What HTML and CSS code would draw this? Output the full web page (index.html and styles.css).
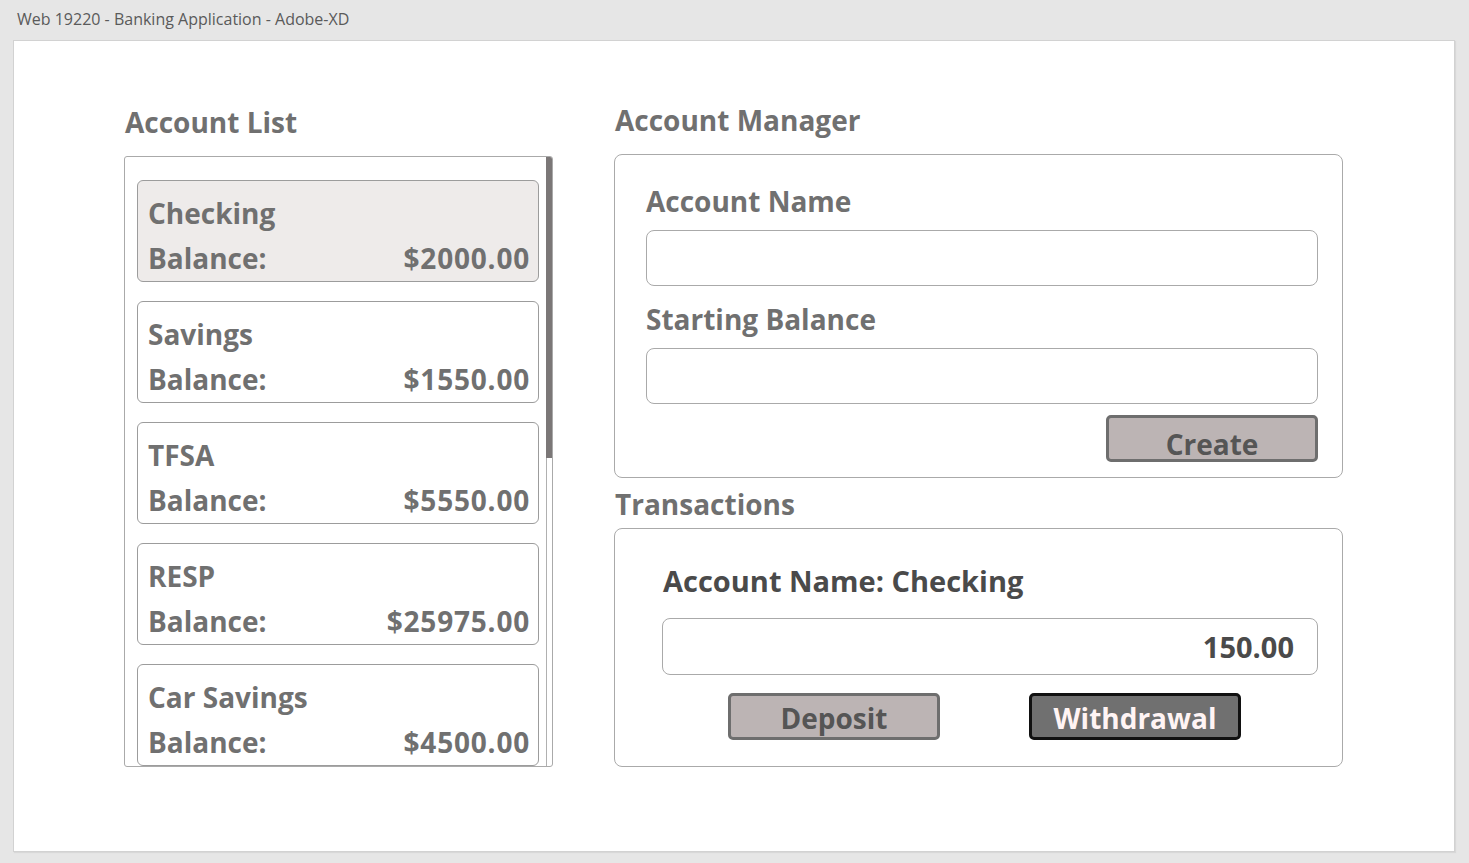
FILE: index.html
```html
<!DOCTYPE html>
<html lang="en">
<head>
<meta charset="utf-8">
<title>Web 19220 - Banking Application - Adobe-XD</title>
<link rel="stylesheet" href="styles.css">
</head>
<body>
<div class="titlebar">Web 19220 - Banking Application - Adobe-XD</div>
<div class="canvas">
  <section class="left">
    <h2 class="heading">Account List</h2>
    <div class="listbox">
      <div class="cards">
        <div class="card selected"><div class="name">Checking</div><div class="bal"><span>Balance:</span><span>$2000.00</span></div></div>
        <div class="card"><div class="name">Savings</div><div class="bal"><span>Balance:</span><span>$1550.00</span></div></div>
        <div class="card"><div class="name">TFSA</div><div class="bal"><span>Balance:</span><span>$5550.00</span></div></div>
        <div class="card"><div class="name">RESP</div><div class="bal"><span>Balance:</span><span>$25975.00</span></div></div>
        <div class="card"><div class="name">Car Savings</div><div class="bal"><span>Balance:</span><span>$4500.00</span></div></div>
      </div>
      <div class="scrollbar"><div class="thumb"></div></div>
    </div>
  </section>
  <section class="right">
    <h2 class="heading">Account Manager</h2>
    <div class="panel manager">
      <div class="label">Account Name</div>
      <div class="input"></div>
      <div class="label second">Starting Balance</div>
      <div class="input"></div>
      <div class="actions"><button class="btn create">Create</button></div>
    </div>
    <h2 class="heading trans-heading">Transactions</h2>
    <div class="panel transactions">
      <div class="tlabel">Account Name: Checking</div>
      <div class="input amount">150.00</div>
      <div class="tbuttons">
        <button class="btn deposit">Deposit</button>
        <button class="btn withdraw">Withdrawal</button>
      </div>
    </div>
  </section>
</div>
</body>
</html>
```
FILE: styles.css
```css
* { box-sizing: border-box; }
html, body { margin: 0; padding: 0; }
body {
  background: #e6e6e6;
  font-family: "Open Sans", "Noto Sans", sans-serif;
  width: 1469px;
  height: 863px;
  overflow: hidden;
}
.titlebar {
  height: 40px;
  padding-left: 17px;
  line-height: 38px;
  font-size: 16px;
  color: #5a5a5a;
}
.canvas {
  margin-left: 13px;
  width: 1442px;
  height: 812px;
  background: #fff;
  border: 1px solid #d2d2d2;
  box-shadow: 1px 1px 1px #d8d8d8;
  display: grid;
  grid-template-columns: 429px 729px;
  column-gap: 61px;
  padding: 62px 0 0 110px;
  align-items: start;
}
.heading {
  margin: 0 0 17px 0;
  font-size: 28px;
  line-height: 34px;
  font-weight: 700;
  color: #707070;
  padding-left: 1px;
}
.left { margin-top: 2px; }
.listbox {
  height: 611px;
  border: 1px solid #aaa;
  border-radius: 3px;
  display: flex;
  overflow: hidden;
}
.cards {
  flex: none;
  width: 414px;
  padding: 23px 0 0 12px;
  display: flex;
  flex-direction: column;
  gap: 19px;
}
.card {
  flex: none;
  height: 102px;
  border: 1px solid #9c9c9c;
  border-radius: 6px;
  padding: 10px 8px 0 10px;
  color: #707070;
  font-weight: 700;
  font-size: 28px;
  line-height: 45px;
}
.card.selected { background: #eeebea; }
.bal { display: flex; justify-content: space-between; }
.bal span:last-child { letter-spacing: 0.8px; }
.scrollbar {
  flex: none;
  margin-left: 7px;
  width: 6px;
  height: 100%;
  border-left: 1px solid #b0b0b0;
}
.thumb {
  margin-left: -1px;
  width: 6px;
  height: 301px;
  background: #7b7777;
}
.panel {
  border: 1px solid #aaa;
  border-radius: 8px;
}
.manager {
  height: 324px;
  padding: 28px 24px 0 31px;
}
.label {
  font-size: 28px;
  line-height: 36px;
  font-weight: 700;
  color: #707070;
  margin-bottom: 11px;
}
.label.second { margin-top: 15px; }
.input {
  height: 56px;
  border: 1px solid #aaa;
  border-radius: 8px;
  background: #fff;
}
.actions {
  display: flex;
  justify-content: flex-end;
  margin-top: 11px;
}
.btn {
  width: 212px;
  height: 47px;
  border-radius: 5px;
  font-family: inherit;
  font-weight: 700;
  font-size: 28px;
  padding: 6px 0 0 0;
  line-height: 40px;
  cursor: pointer;
}
.create {
  background: #bcb4b4;
  border: 3px solid #6e6e6e;
  color: #555;
}
.trans-heading { margin: 9px 0 7px 0; }
.transactions {
  height: 239px;
  padding: 34px 24px 0 47px;
}
.tlabel {
  font-size: 29px;
  line-height: 36px;
  font-weight: 700;
  color: #4a4a4a;
  font-stretch: 92%;
  padding-left: 1px;
  margin-bottom: 19px;
}
.amount {
  height: 57px;
  text-align: right;
  padding-right: 23px;
  font-size: 29px;
  line-height: 55px;
  font-weight: 700;
  color: #4a4a4a;
  font-stretch: 93%;
}
.tbuttons {
  display: flex;
  gap: 89px;
  padding-left: 66px;
  margin-top: 18px;
}
.tbuttons .btn {
  font-stretch: 93%;
  padding-top: 2px;
}
.deposit {
  background: #bcb4b4;
  border: 3px solid #6e6e6e;
  color: #555;
}
.withdraw {
  background: #707070;
  border: 3px solid #111;
  color: #fff4f4;
}
```
